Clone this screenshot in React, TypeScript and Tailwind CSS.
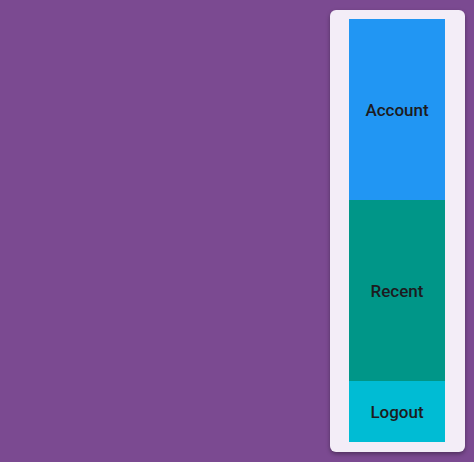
export default function App() {
  return (
    <div
      className="w-[474px] h-[462px] bg-[#7b4a91] flex justify-end pt-[10px] pr-[9px] pb-[11px]"
      style={{ fontFamily: "Roboto, 'Liberation Sans', sans-serif" }}
    >
      <div className="w-[135px] h-[442px] bg-[#f3edf7] rounded-[6px] shadow-[0_2px_4px_rgba(0,0,0,0.35)] pl-[19px] pr-[20px] pt-[9px] pb-[10px]">
        <div className="flex flex-col h-full text-[17px] font-medium text-[#1d1b20]">
          <div className="h-[181px] bg-[#2196f3] flex items-center justify-center pt-[2px]">Account</div>
          <div className="h-[181px] bg-[#009688] flex items-center justify-center pt-[2px]">Recent</div>
          <div className="flex-1 bg-[#00bcd4] flex items-center justify-center pt-[2px]">Logout</div>
        </div>
      </div>
    </div>
  );
}
